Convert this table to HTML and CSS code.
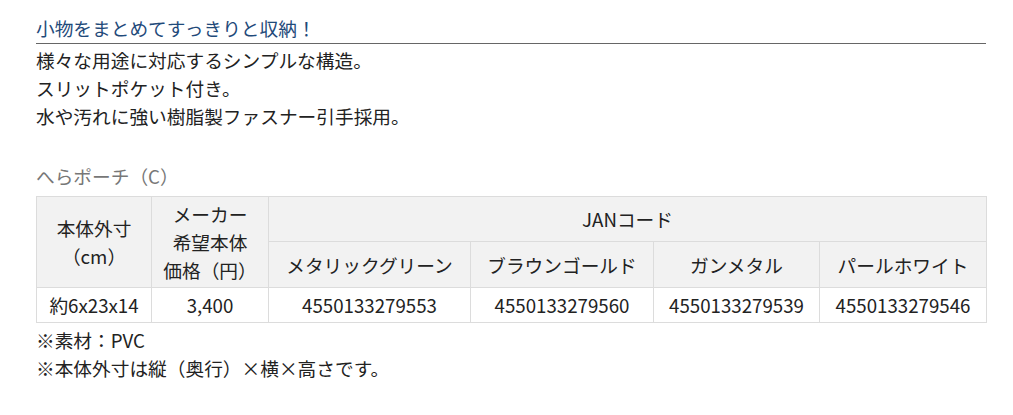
FILE: index.html
```html
<!DOCTYPE html>
<html lang="ja">
<head>
<meta charset="utf-8">
<link rel="stylesheet" href="styles.css">
</head>
<body>
<div class="page">
  <h2 class="title">小物をまとめてすっきりと収納！</h2>
  <p class="desc">様々な用途に対応するシンプルな構造。<br>スリットポケット付き。<br>水や汚れに強い樹脂製ファスナー引手採用。</p>
  <p class="caption">へらポーチ（C）</p>
  <table class="spec">
    <colgroup>
      <col class="c1"><col class="c2"><col class="c3"><col class="c4"><col class="c5"><col class="c6">
    </colgroup>
    <tr class="r1">
      <th rowspan="2">本体外寸<br>（cm）</th>
      <th rowspan="2">メーカー<br>希望本体<br>価格（円）</th>
      <th colspan="4">JANコード</th>
    </tr>
    <tr class="r2">
      <th>メタリックグリーン</th>
      <th>ブラウンゴールド</th>
      <th>ガンメタル</th>
      <th>パールホワイト</th>
    </tr>
    <tr class="r3">
      <td>約6x23x14</td>
      <td>3,400</td>
      <td>4550133279553</td>
      <td>4550133279560</td>
      <td>4550133279539</td>
      <td>4550133279546</td>
    </tr>
  </table>
  <p class="notes">※素材：PVC<br>※本体外寸は縦（奥行）×横×高さです。</p>
</div>
</body>
</html>
```
FILE: styles.css
```css
html, body {
  margin: 0;
  padding: 0;
  background: #fff;
}
body {
  font-family: "Noto Sans CJK JP", "Noto Sans", sans-serif;
  font-size: 18.7px;
  line-height: 28px;
  color: #222;
}
.page {
  width: 950px;
  padding: 14px 0 0 36px;
}
.title {
  margin: 0;
  font-size: 18.7px;
  font-weight: normal;
  line-height: 28px;
  color: #1f4a7a;
  border-bottom: 1px solid #666;
  padding-bottom: 1px;
}
.desc {
  margin: 2px 0 0;
}
.caption {
  margin: 32px 0 0;
  color: #777;
}
.spec {
  margin-top: 6px;
  width: 950px;
  border-collapse: collapse;
  table-layout: fixed;
}
.c1 { width: 115px; }
.c2 { width: 117px; }
.c3 { width: 202px; }
.c4 { width: 183px; }
.c5 { width: 166px; }
.c6 { width: 167px; }
.spec th, .spec td {
  border: 1px solid #dcdcdc;
  padding: 3px 0;
  text-align: center;
  vertical-align: middle;
  font-weight: normal;
  white-space: nowrap;
}
.spec th {
  background: #f2f2f2;
}
.r1 th { height: 38px; }
.r2 th { height: 39px; }
.r3 td { height: 27px; }
.notes {
  margin: 3px 0 0;
}
```
